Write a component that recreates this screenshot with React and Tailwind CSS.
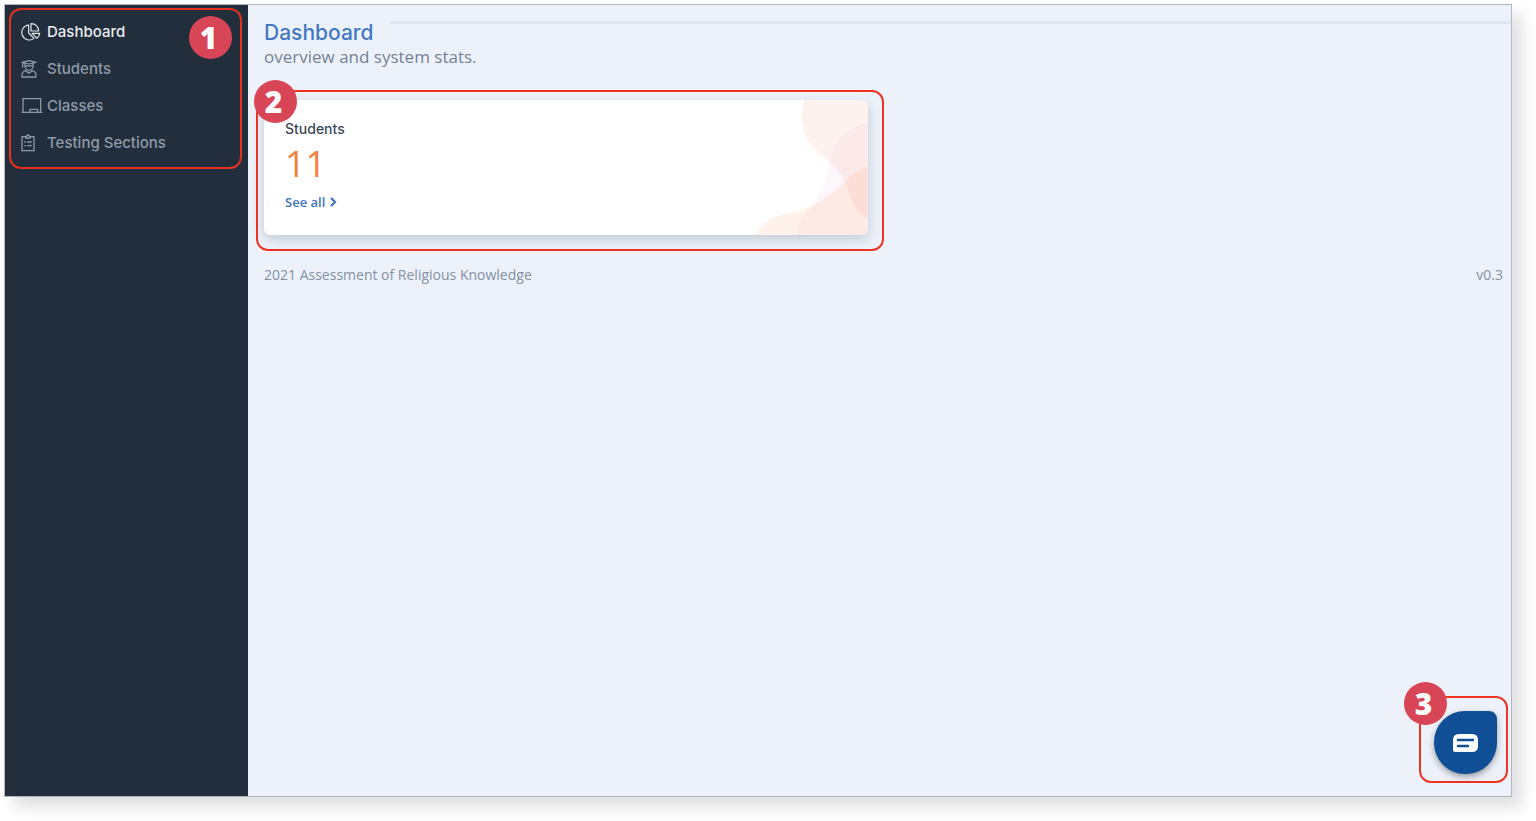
import React from "react";

const PieIcon = () => (
  <svg viewBox="62 66 60 54" className="h-[18px] w-5" fill="none" stroke="currentColor" strokeWidth="3.4" strokeLinejoin="round">
    <path d="M85 72A22.5 22.5 0 1 0 101 112L85 96Z" />
    <path d="M92 68A22 22 0 0 1 115 90H92Z" />
    <path d="M95 97H118A21 21 0 0 1 110 112Z" />
  </svg>
);

const StudentIcon = () => (
  <svg viewBox="63 177 48 54" className="h-[18px] w-4" fill="none" stroke="currentColor" strokeWidth="3.8" strokeLinejoin="round" strokeLinecap="round">
    <path d="M66 184L87 179L108 184L87 189Z" />
    <path d="M68 185V198" />
    <path d="M75 187V196A12 12 0 0 0 99 196V187" />
    <path d="M76 195C84 195 92 195 99 193" />
    <path d="M66 228C65 217 69 211 77 209L87 217L97 209C105 211 109 217 108 228Z" />
  </svg>
);

const BoardIcon = () => (
  <svg viewBox="64 288 66 51" className="h-[17px] w-[22px]" fill="none" stroke="currentColor" strokeWidth="3.8">
    <path d="M70 334V293H123V334" />
    <path d="M66 334H128" />
    <path d="M91 334V325H114V334" />
  </svg>
);

const ClipboardIcon = () => (
  <svg viewBox="62 399 42 54" className="h-[18px] w-3.5" fill="none" stroke="currentColor" strokeWidth="3.8" strokeLinejoin="round">
    <path d="M76 407H65V449H101V407H90" />
    <path d="M76 411V406H79A4 4 0 0 1 87 406H90V411Z" />
    <path d="M72 423H77M81 423H94M72 434H77M81 434H94" />
  </svg>
);

const navItems = [
  { label: "Dashboard", icon: PieIcon, active: true },
  { label: "Students", icon: StudentIcon },
  { label: "Classes", icon: BoardIcon },
  { label: "Testing Sections", icon: ClipboardIcon },
];

function Badge({ number, className }) {
  return (
    <span
      className={`absolute flex h-[43px] w-[43px] items-center justify-center rounded-full bg-[#d84556] pr-1 font-['Open_Sans'] text-3xl font-extrabold text-white ${className}`}
    >
      {number}
    </span>
  );
}

function Sidebar() {
  return (
    <aside className="w-[243px] shrink-0 bg-[#222e3c] pt-[3px] pr-1.5 pl-1">
      <nav className="relative rounded-xl border-2 border-[#e6301f] px-2.5 pt-[3px] pb-1.5">
        <ul>
          {navItems.map(({ label, icon: Icon, active }) => (
            <li key={label}>
              <a
                href="#"
                className={`flex h-[37px] items-center font-['Inter'] text-[15px] leading-[25px] font-medium ${
                  active ? "text-[#e9ecef]" : "text-[#8f9baa]"
                }`}
              >
                <span className="flex w-[26px] shrink-0">
                  <Icon />
                </span>
                {label}
              </a>
            </li>
          ))}
        </ul>
        <Badge number="1" className="top-1.5 right-2" />
      </nav>
    </aside>
  );
}

function StudentsCard() {
  return (
    <section className="relative w-1/2 rounded-xl border-2 border-[#ee3524] pt-2 pr-3.5 pb-3.5 pl-1.5">
      <div className="relative overflow-hidden rounded-md bg-white px-[21px] pt-[19px] pb-5 shadow-[0_4px_12px_rgba(65,80,100,0.25)]">
        <svg viewBox="75 60 338 405" className="absolute top-0 right-0 h-full" preserveAspectRatio="xMaxYMid meet">
          <path
            d="M222 60C205 125 220 185 275 225C300 245 335 275 350 315C365 360 372 392 413 415V60Z"
            fill="#f87148"
            fillOpacity="0.09"
          />
          <path
            d="M413 129C360 138 308 175 302 245C290 310 275 335 240 385C215 410 202 430 201 465H413Z"
            fill="#d946a0"
            fillOpacity="0.05"
          />
          <path
            d="M75 465C95 430 120 413 160 403C240 387 280 365 345 305C370 280 390 268 413 259V465Z"
            fill="#fb8b3c"
            fillOpacity="0.11"
          />
        </svg>
        <h2 className="font-['Inter'] text-sm leading-5 font-medium text-[#3c4859]">Students</h2>
        <p className="font-['Open_Sans'] text-4xl leading-[50px] text-[#f5803e]">11</p>
        <a href="#" className="flex items-center gap-1 font-['Open_Sans'] text-[13px] leading-[26px] font-semibold text-[#3e74be]">
          See all
          <svg viewBox="0 0 8 10" className="h-2.5 w-2" fill="none" stroke="currentColor" strokeWidth="2.2">
            <path d="M2 1L6 5L2 9" />
          </svg>
        </a>
      </div>
      <Badge number="2" className="-top-3 -left-1" />
    </section>
  );
}

function ChatWidget() {
  return (
    <div className="absolute right-[3px] bottom-[13px] rounded-xl border-2 border-[#ee3524] pt-[13px] pr-[9px] pb-[7px] pl-[13px]">
      <button
        aria-label="Chat"
        className="flex h-[63px] w-[63px] items-center justify-center rounded-[31px] rounded-tr-lg bg-[#104e95] shadow-[0_3px_6px_rgba(0,0,0,0.35)]"
      >
        <svg viewBox="0 0 25 18" className="h-[18px] w-[25px]">
          <path d="M6 0H19Q25 0 25 6V12Q25 18 19 18H2Q0 18 0 16V6Q0 0 6 0Z" fill="#fff" />
          <path d="M5 6H20M5 12H15" stroke="#104e95" strokeWidth="2.4" strokeLinecap="round" />
        </svg>
      </button>
      <Badge number="3" className="-top-4 -left-[17px]" />
    </div>
  );
}

export default function App() {
  return (
    <div className="flex min-h-screen bg-white pt-1 pr-6 pb-6 pl-1">
      <div className="relative flex flex-1 border border-[#b3b6bd] bg-[#edf2fa] shadow-[10px_10px_14px_rgba(0,0,0,0.12)]">
        <Sidebar />
        <main className="min-w-0 flex-1 pt-4 pl-2">
          <header className="pl-2">
            <div className="flex items-start gap-4">
              <h1 className="font-['Inter'] text-[21px] leading-6 font-medium text-[#4478c2]">Dashboard</h1>
              <div className="h-[3px] flex-1 bg-[#dce5f0]" />
            </div>
            <p className="font-['Open_Sans'] text-[17px] leading-6 text-[#748194]">overview and system stats.</p>
          </header>
          <div className="mt-[21px]">
            <StudentsCard />
          </div>
          <footer className="mt-3.5 flex justify-between pr-2 pl-2 font-['Open_Sans'] text-sm text-[#8390a2]">
            <span>2021 Assessment of Religious Knowledge</span>
            <span>v0.3</span>
          </footer>
        </main>
        <ChatWidget />
      </div>
    </div>
  );
}
